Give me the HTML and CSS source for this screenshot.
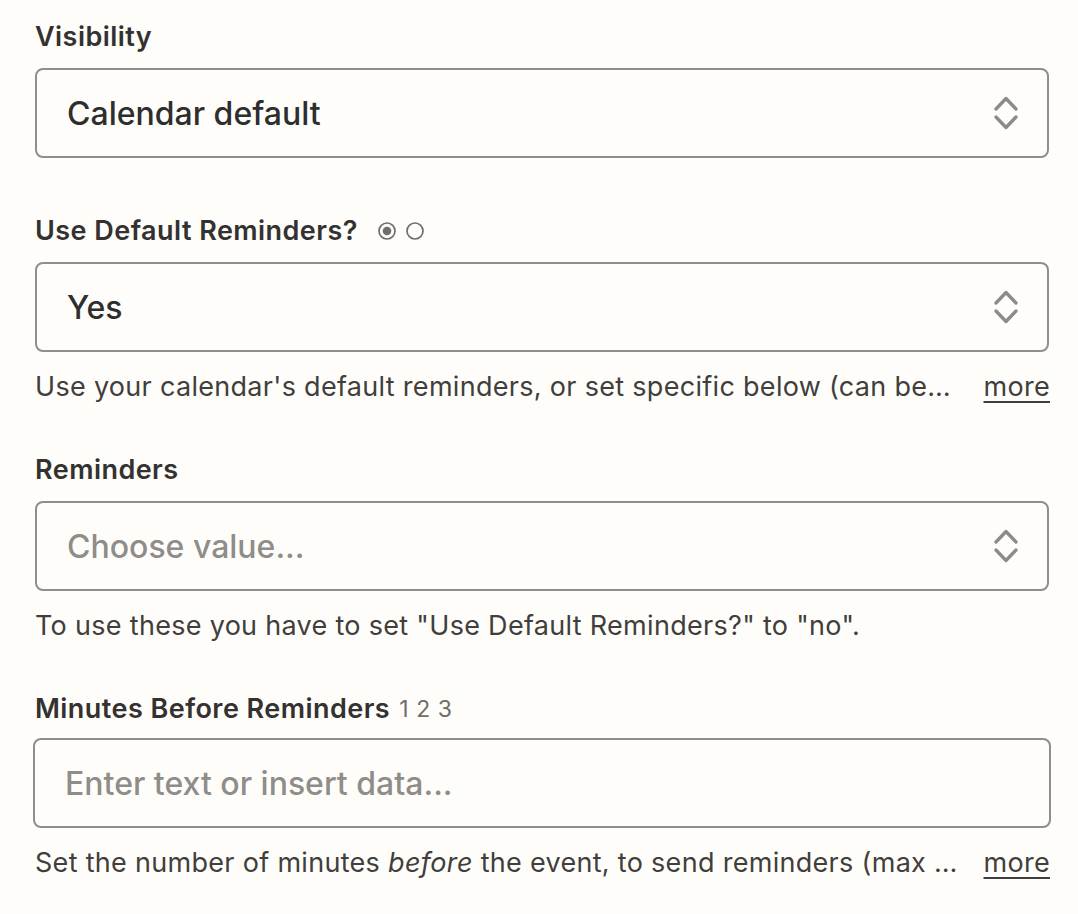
FILE: index.html
```html
<!DOCTYPE html>
<html>
<head>
<meta charset="utf-8">
<link rel="stylesheet" href="styles.css">
</head>
<body>
<div class="form">
  <div class="field field-first">
    <div class="label">Visibility</div>
    <div class="select">
      <span class="value">Calendar default</span>
      <svg class="chev" width="24" height="36" viewBox="0 0 24 36"><path d="M2 14 L12 3.5 L22 14 M2 22 L12 32.5 L22 22" fill="none" stroke="#8c8b88" stroke-width="3.3" stroke-linecap="round" stroke-linejoin="round"/></svg>
    </div>
  </div>

  <div class="field">
    <div class="label">Use Default Reminders?
      <span class="radios">
        <svg width="18" height="18" viewBox="0 0 18 18"><circle cx="9" cy="9" r="8" fill="none" stroke="#6f6e6b" stroke-width="1.7"/><circle cx="9" cy="9" r="4.3" fill="#6f6e6b"/></svg>
        <svg width="18" height="18" viewBox="0 0 18 18"><circle cx="9" cy="9" r="8" fill="none" stroke="#6f6e6b" stroke-width="1.7"/></svg>
      </span>
    </div>
    <div class="select">
      <span class="value">Yes</span>
      <svg class="chev" width="24" height="36" viewBox="0 0 24 36"><path d="M2 14 L12 3.5 L22 14 M2 22 L12 32.5 L22 22" fill="none" stroke="#8c8b88" stroke-width="3.3" stroke-linecap="round" stroke-linejoin="round"/></svg>
    </div>
    <div class="help">
      <span class="help-text">Use your calendar's default reminders, or set specific below (can be combined with the reminders you set here).</span>
      <a class="more" href="#">more</a>
    </div>
  </div>

  <div class="field">
    <div class="label">Reminders</div>
    <div class="select">
      <span class="value placeholder">Choose value...</span>
      <svg class="chev" width="24" height="36" viewBox="0 0 24 36"><path d="M2 14 L12 3.5 L22 14 M2 22 L12 32.5 L22 22" fill="none" stroke="#8c8b88" stroke-width="3.3" stroke-linecap="round" stroke-linejoin="round"/></svg>
    </div>
    <div class="help">
      <span class="help-text">To use these you have to set "Use Default Reminders?" to "no".</span>
    </div>
  </div>

  <div class="field field-last">
    <div class="label">Minutes Before Reminders <span class="nums">1 2 3</span></div>
    <div class="textbox">
      <span class="value placeholder">Enter text or insert data...</span>
    </div>
    <div class="help">
      <span class="help-text">Set the number of minutes <em>before</em> the event, to send reminders (max 40320).</span>
      <a class="more" href="#">more</a>
    </div>
  </div>
</div>
</body>
</html>
```

FILE: styles.css
```css
html, body {
  margin: 0;
  padding: 0;
  background: #fffdf9;
}
body {
  font-family: Inter, "Noto Sans", sans-serif;
  color: #2d2e2e;
}
.form {
  padding: 17px 29px 0 35px;
  display: flex;
  flex-direction: column;
}
.field {
  display: flex;
  flex-direction: column;
  margin-bottom: 43px;
}
.field-first {
  margin-bottom: 53px;
}
.label {
  font-size: 27px;
  font-weight: 600;
  letter-spacing: 0.45px;
  line-height: 40px;
  margin-bottom: 11px;
  display: flex;
  align-items: center;
  color: #333231;
}
.radios {
  display: inline-flex;
  gap: 10px;
  margin-left: 20px;
}
.radios svg {
  display: block;
}
.nums {
  font-size: 23px;
  font-weight: 400;
  letter-spacing: 0.6px;
  color: #6f6e6b;
  margin-left: 9px;
}
.select, .textbox {
  height: 90px;
  box-sizing: border-box;
  border: 2px solid #8f8e8b;
  border-radius: 8px;
  display: flex;
  align-items: center;
  justify-content: space-between;
  padding: 0 29px 0 30px;
}
.chev {
  display: block;
}
.textbox {
  margin: -2px -2px 0;
}
.value {
  font-size: 32px;
  font-weight: 500;
  color: #2d2e2e;
}
.placeholder {
  color: #8f8d89;
}
.help {
  display: flex;
  align-items: center;
  gap: 26px;
  margin-top: 15px;
  margin-right: -1px;
  line-height: 40px;
  font-size: 27px;
  letter-spacing: 0.3px;
  color: #403f3d;
}
.help-text {
  flex: 1;
  white-space: nowrap;
  overflow: hidden;
  text-overflow: ellipsis;
}
.more {
  color: #403f3d;
  text-decoration: underline;
  text-underline-offset: 5px;
  text-decoration-thickness: 2px;
}
```
